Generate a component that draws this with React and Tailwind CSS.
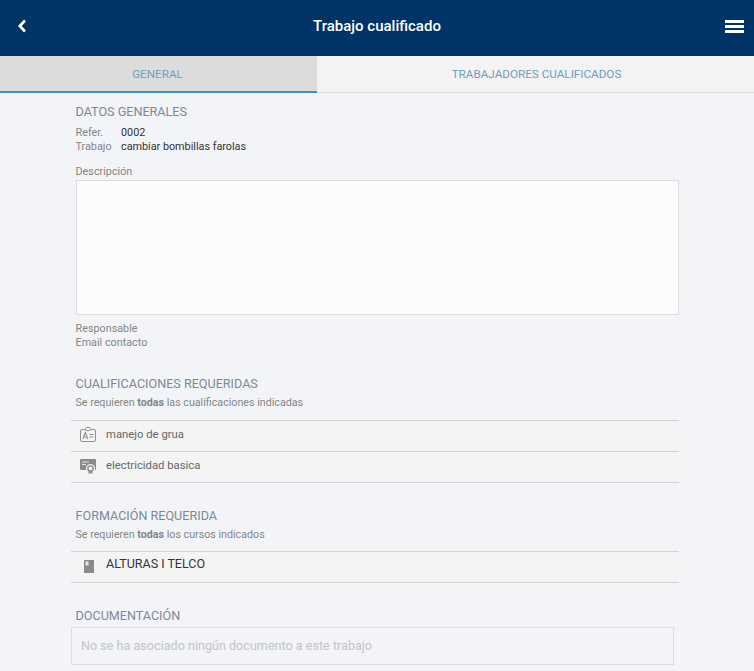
import { useState } from "react";

function Heading({ children }) {
  return <h2 className="text-[12.6px] leading-[16px] text-[#7d8896] uppercase">{children}</h2>;
}

function CredIcon() {
  return (
    <svg width="16" height="15" viewBox="0 0 16 15" fill="none" stroke="#909090" className="-mt-[1px]">
      <rect x="0.5" y="2.5" width="15" height="12" rx="1.5" />
      <rect x="5.5" y="0.5" width="5" height="3" rx="1" fill="#f4f4f4" />
      <path d="M2.8 12 L5.3 5.5 L7.8 12 M3.7 10 H6.9" strokeWidth="1.1" />
      <path d="M9.5 7.5 H13.3 M9.5 10 H13.3" strokeWidth="1.1" />
    </svg>
  );
}

function CertIcon() {
  return (
    <svg width="16" height="15" viewBox="0 0 16 15">
      <rect x="0" y="0" width="16" height="11" rx="1" fill="#8a8a8a" />
      <path d="M2 3 H9 M2 5.5 H6" stroke="#e4e4e4" strokeWidth="1" />
      <circle cx="10.5" cy="9.5" r="4.5" fill="#f4f4f4" />
      <circle cx="10.5" cy="9.5" r="2.6" fill="none" stroke="#8a8a8a" strokeWidth="1.4" />
      <path d="M8.6 11.5 V15 L10.5 14 L12.4 15 V11.5" fill="#8a8a8a" />
    </svg>
  );
}

function BookIcon() {
  return (
    <svg width="10" height="13" viewBox="0 0 10 13" className="ml-[4px] mt-[3px]">
      <path d="M1 0 H10 V13 H1 A1 1 0 0 1 0 12 V1 A1 1 0 0 1 1 0 Z" fill="#8a8a8a" />
      <rect x="1.5" y="1.5" width="3" height="4" fill="#e8e8e8" />
    </svg>
  );
}

function Row({ icon, children, className }) {
  return (
    <div className={`flex bg-[#f4f4f4] border-b border-[#d4d4d4] pl-[9px] ${className}`}>
      <div className="w-[26px] flex justify-start items-start">{icon}</div>
      <div className="text-[#666] text-[11.3px]">{children}</div>
    </div>
  );
}

export default function App() {
  const [tab, setTab] = useState(0);
  const tabs = ["General", "Trabajadores cualificados"];

  return (
    <div className="h-[671px] overflow-hidden bg-[#f2f4f8] font-['Roboto',sans-serif] text-[10.8px] leading-[14px] text-[#858585]">
      <header className="h-[56px] bg-[#003366] flex items-center justify-between pl-[17px] pr-[10px] pb-[4px] text-white">
        <svg width="10" height="14" viewBox="0 0 10 14" fill="none" stroke="white" strokeWidth="2.6">
          <path d="M8 1.5 L2.8 7 L8 12.5" />
        </svg>
        <h1 className="text-[15px] font-medium ml-[2px]">Trabajo cualificado</h1>
        <div className="w-[19px] flex flex-col gap-[2px]">
          <span className="h-[3px] bg-white" />
          <span className="h-[3px] bg-white" />
          <span className="h-[3px] bg-white" />
        </div>
      </header>

      <nav className="flex h-[37px]">
        {tabs.map((t, i) => (
          <button
            key={t}
            onClick={() => setTab(i)}
            className={`h-full uppercase text-[11.7px] text-[#6f9cc0] ${i === 0 ? "w-[317px] pr-[2px]" : "flex-1 pl-[2px]"} ${
              tab === i ? "bg-[#dcdcdc] border-b-2 border-[#3f8ccb]" : "bg-[#f3f3f3] border-b border-[#dcdcdc]"
            }`}
          >
            {t}
          </button>
        ))}
      </nav>

      <main className="pl-[71px] w-[679px]">
        <section className="pl-[4.5px] pt-[11px]">
          <Heading>Datos generales</Heading>
          <dl className="mt-[6px] grid grid-cols-[45.5px_1fr]">
            <dt>Refer.</dt>
            <dd className="text-[#333]">0002</dd>
            <dt>Trabajo</dt>
            <dd className="text-[#333]">cambiar bombillas farolas</dd>
          </dl>
          <p className="mt-[11px]">Descripción</p>
          <div className="mt-[1px] ml-[0.5px] h-[135px] border border-[#dcdcdc] bg-[#fcfcfc]" />
          <p className="mt-[7px]">Responsable</p>
          <p>Email contacto</p>
        </section>

        <section className="mt-[26px]">
          <div className="pl-[4.5px]">
            <Heading>Cualificaciones requeridas</Heading>
            <p className="mt-[4px] text-[10.7px]">
              Se requieren <b className="font-bold">todas</b> las cualificaciones indicadas
            </p>
          </div>
          <div className="mt-[10px] border-t border-[#d4d4d4]">
            <Row icon={<CredIcon />} className="h-[31px] pt-[7px]">manejo de grua</Row>
            <Row icon={<CertIcon />} className="h-[31px] pt-[7px]">electricidad basica</Row>
          </div>
        </section>

        <section className="mt-[25px]">
          <div className="pl-[4.5px]">
            <Heading>Formación requerida</Heading>
            <p className="mt-[4px] text-[10.7px]">
              Se requieren <b className="font-bold">todas</b> los cursos indicados
            </p>
          </div>
          <div className="mt-[9px] border-t border-[#d4d4d4]">
            <Row icon={<BookIcon />} className="h-[31px] pt-[5px]">
              <span className="text-[12.5px] text-[#333]">ALTURAS I TELCO</span>
            </Row>
          </div>
        </section>

        <section className="mt-[25px]">
          <div className="pl-[4.5px]">
            <Heading>Documentación</Heading>
          </div>
          <div className="mt-[3px] w-[603px] h-[38px] border border-[#dcdcdc] flex items-center pl-[9px] text-[12.6px] text-[#c4c4c4]">
            No se ha asociado ningún documento a este trabajo
          </div>
        </section>
      </main>
    </div>
  );
}
